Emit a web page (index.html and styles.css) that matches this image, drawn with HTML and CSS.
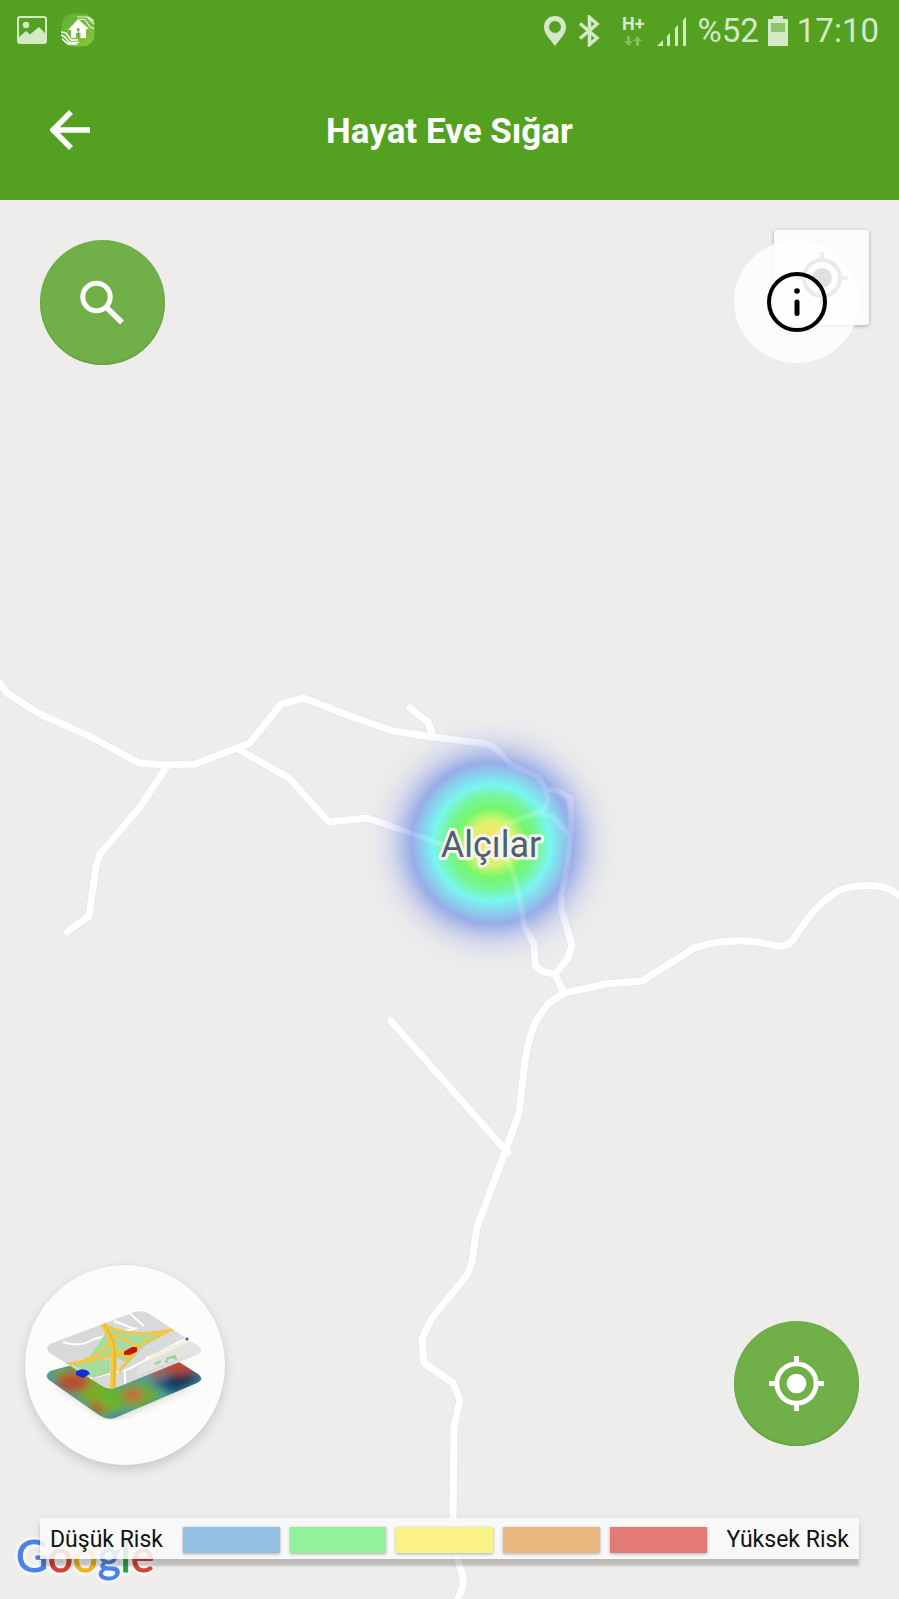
FILE: index.html
```html
<!DOCTYPE html>
<html lang="tr">
<head>
<meta charset="utf-8">
<meta name="viewport" content="width=device-width, initial-scale=1">
<title>Hayat Eve Sığar</title>
<link rel="stylesheet" href="styles.css">
</head>
<body>
<div class="app">
  <header class="header">
    <div class="status">
      <div class="status-group status-left">
        <svg width="30" height="28" viewBox="0 0 30 28" aria-hidden="true">
          <rect x="1" y="1" width="28" height="26" rx="2" fill="none" stroke="#d4e9c6" stroke-width="2"/>
          <circle cx="9" cy="9" r="3.2" fill="#d4e9c6"/>
          <path d="M2 21 L9 15 L13 18.500 L22 11 L28 17 V26 H2Z" fill="#d4e9c6"/>
        </svg>
        <svg width="34" height="34" viewBox="0 0 34 34" aria-hidden="true">
          <defs><linearGradient id="app-bg" x1="0" y1="0" x2="1" y2="1"><stop offset="0" stop-color="#5db032"/><stop offset="1" stop-color="#8cc343"/></linearGradient></defs>
          <rect x="0.500" y="0.500" width="33" height="33" rx="12" fill="url(#app-bg)"/>
          <path d="M17 6 L28 16 H25 V25 H19.500 V20 H15 V25 H10 V17 H7Z" fill="#fff"/>
          <circle cx="17.200" cy="16.500" r="1.500" fill="#5fae3d"/>
          <path d="M17 18h1v5h-1z" fill="#5fae3d"/>
          <path d="M16 4 H26 L33 11 M18 6.500 H24 L29 14 L33 15.500 M27 4 L33 8" fill="none" stroke="#e9f5dd" stroke-width="1.200"/>
          <path d="M0 19 L5 20 L10 27 H17 M0 22 L4 24 L8 29.500 H18 M1 26 L7 31 H16" fill="none" stroke="#fff" stroke-width="1.400"/>
        </svg>
      </div>
      <div class="status-group status-right">
        <svg class="pin" width="22" height="30" viewBox="0 0 22 30" aria-hidden="true"><path fill-rule="evenodd" d="M11 0C4.500 0 0 4.800 0 11c0 7 6 12 11 19 5-7 11-12 11-19C22 4.800 17.500 0 11 0Zm0 5a6 6 0 1 1 0 12 6 6 0 0 1 0-12Z" fill="#d4e9c6"/></svg>
        <svg class="bluetooth" width="22" height="32" viewBox="0 0 22 32" aria-hidden="true"><path d="M2 8.500 L19 23 L11.500 29.500 V2.500 L19 9 L2 23.500" fill="none" stroke="#d4e9c6" stroke-width="3.500"/></svg>
        <div class="network"><span>H+</span>
          <svg width="20" height="10" viewBox="0 0 20 10" aria-hidden="true"><path d="M4 0h3v5h3l-4.500 5L1 5h3ZM13 10h3V5h3l-4.500-5L10 5h3Z" fill="#86bd60"/></svg>
        </div>
        <svg class="signal" width="30" height="30" viewBox="0 0 30 30" aria-hidden="true"><path d="M0 30 L6 24 V30ZM10 20 L13 17 V30 H10ZM18 12 L21 9 V30 H18ZM26 4 L29 1 V30 H26Z" fill="#d4e9c6"/></svg>
        <span>%52</span>
        <svg class="battery" width="20" height="30" viewBox="0 0 20 30" aria-hidden="true"><path d="M5 0h10v3h5v27H0V3h5Z" fill="#d4e9c6"/><path d="M3 7h14v9H3z" fill="#8fc36c"/></svg>
        <time>17:10</time>
      </div>
    </div>
    <div class="toolbar">
      <button class="back" aria-label="Geri"><svg width="40" height="40" viewBox="0 0 40 40" aria-hidden="true"><path d="M21 2 L3 20 L21 38 M3 20 H40" fill="none" stroke="#fff" stroke-width="5.500"/></svg></button>
      <h1 class="title">Hayat Eve Sığar</h1>
    </div>
  </header>

  <main class="map">
    <svg class="map-canvas" viewBox="0 200 899 1399" preserveAspectRatio="xMidYMid slice" role="img" aria-label="Alçılar risk haritası">
      <defs>
        <radialGradient id="heat" gradientUnits="userSpaceOnUse" cx="492" cy="843" r="130">
          <stop offset="0" stop-color="#ffd25c" stop-opacity=".95"/>
          <stop offset=".08" stop-color="#f8e660" stop-opacity=".95"/>
          <stop offset=".17" stop-color="#d8f566" stop-opacity=".94"/>
          <stop offset=".27" stop-color="#6bf763" stop-opacity=".92"/>
          <stop offset=".35" stop-color="#69f68c" stop-opacity=".9"/>
          <stop offset=".45" stop-color="#69f7ef" stop-opacity=".88"/>
          <stop offset=".52" stop-color="#77d4ee" stop-opacity=".87"/>
          <stop offset=".62" stop-color="#8ba2e6" stop-opacity=".87"/>
          <stop offset=".7" stop-color="#96a7e7" stop-opacity=".57"/>
          <stop offset=".8" stop-color="#9caee8" stop-opacity=".23"/>
          <stop offset=".9" stop-color="#a5b4e8" stop-opacity=".07"/>
          <stop offset="1" stop-color="#a5b4e8" stop-opacity="0"/>
        </radialGradient>
        <g id="roads" fill="none" stroke-linecap="round" stroke-linejoin="round">
          <path d="M-4 678 8 694 40 714 93 738 139 763 165 765 195 764 237 748 250 743 281 704 304 698 347 715 393 731 433 737 482 743Q490 744 495 748L510 764 537 776 545 787 548 800 545 809 536 813 510 823 494 836 508 859 517 885 524 925 534 944 535 965 543 972 555 974 568 958 572 945 562 912 561 895 568 862 571 832 570 798 558 791 546 789"/>
          <path d="M410 708 428 722 433 736M238 749 289 778 329 822 368 818 410 833 441 844M167 766 140 807 100 854 96 866 89 916 67 932M536 813 553 817 567 833M555 974 564 993M391 1021 508 1153"/>
          <path d="M905 899 890 889Q875 884 860 886 842 887 835 893 822 901 808 918L797 934Q789 948 777 946L757 942Q726 938 698 947 693 948 688 952L642 981 606 984 564 993 548 1004 536 1021Q529 1036 525 1060L519 1113 505 1152 477 1227 472 1262 467 1275 432 1318 422 1339 424 1363 453 1383 460 1400 454 1427 453 1517 458 1560 463 1577V1586L456 1604"/>
        </g>
      </defs>
      <use href="#roads" class="road-edge"/>
      <use href="#roads" class="road-fill"/>
      <circle cx="492" cy="843" r="130" fill="url(#heat)"/>
      <use href="#roads" class="road-glow"/>
      <text class="place" x="491" y="857" text-anchor="middle">Alçılar</text>
    </svg>

    <div class="brand" aria-label="Google"><span class="g-blue">G</span><span class="g-red">o</span><span class="g-yellow">o</span><span class="g-blue">g</span><span class="g-green">l</span><span class="g-red">e</span></div>

    <button class="native-locate" aria-label="Konumum"><svg width="52" height="52" viewBox="0 0 52 52" aria-hidden="true"><circle cx="26" cy="26" r="18" fill="none" stroke="#999" stroke-width="4"/><circle cx="26" cy="26" r="10" fill="#666"/><path d="M26 0v8M26 44v8M0 26h8M44 26h8" stroke="#aaa" stroke-width="4"/></svg></button>

    <div class="overlay">
      <div class="row-top">
        <button class="round green" aria-label="Ara"><svg width="46" height="46" viewBox="0 0 46 46" aria-hidden="true"><circle cx="16.500" cy="17" r="13.700" fill="none" stroke="#fff" stroke-width="5"/><path d="M27 28 42 42.500" stroke="#fff" stroke-width="5.500"/></svg></button>
        <button class="round info" aria-label="Bilgi"><svg width="60" height="60" viewBox="0 0 60 60" aria-hidden="true"><circle cx="30" cy="30" r="28" fill="none" stroke="#000" stroke-width="4"/><circle cx="30" cy="19" r="2.800"/><path d="M30 30V41.500" stroke="#000" stroke-width="5" stroke-linecap="round"/></svg></button>
      </div>
      <div class="row-bottom">
        <button class="layers" aria-label="Harita katmanları">
          <svg width="160" height="110" viewBox="0 0 160 110" aria-hidden="true">
            <defs>
              <clipPath id="low"><path d="M5 61 Q-1 66 4 70 L54 105 Q63 111 72 107 L152 73 Q160 69 153 64 L105 34Z"/></clipPath>
              <clipPath id="high"><path d="M5 34 Q-1 38 5 43 L57 76 Q65 81 73 77 L152 45 Q160 41 153 36 L103 3 Q98 0 89 2Z"/></clipPath>
              <filter id="soft" x="-30%" y="-30%" width="160%" height="160%"><feGaussianBlur stdDeviation="4"/></filter>
              <linearGradient id="fade"><stop offset="0" stop-color="#d7d8d8"/><stop offset=".8" stop-color="#d9dadb"/><stop offset="1" stop-color="#e9e9ea"/></linearGradient>
            </defs>
            <path d="M8 74 65 112 152 75Z" fill="#000" opacity=".15" filter="url(#soft)"/>
            <g clip-path="url(#low)">
              <rect width="160" height="114" fill="#4d9c9e"/>
              <g filter="url(#soft)">
                <path d="M5 60 60 110 85 95 45 58Z" fill="#78ac2b"/>
                <ellipse cx="28" cy="72" rx="17" ry="10" fill="#b84d2f"/>
                <ellipse cx="53" cy="97" rx="9" ry="7" fill="#b1662c"/>
                <ellipse cx="72" cy="88" rx="20" ry="10" fill="#65b72e"/>
                <ellipse cx="93" cy="86" rx="22" ry="13" fill="#69a83b"/>
                <ellipse cx="88" cy="85" rx="10" ry="6" fill="#d05a3c"/>
                <path d="M105 73 145 59 160 67 130 84Z" fill="#154d77"/>
                <ellipse cx="135" cy="70" rx="14" ry="7" fill="#12364f"/>
                <ellipse cx="134" cy="55" rx="20" ry="9" fill="#bb4939"/>
                <ellipse cx="111" cy="62" rx="9" ry="5" fill="#be5140"/>
                <path d="M55 107 80 102 76 112Z" fill="#1980a0"/>
              </g>
            </g>
            <g clip-path="url(#high)">
              <path d="M0 0H160V85H0Z" fill="url(#fade)"/>
              <path d="M18 32Q35 38 49 29L92 18M69 11 90 19M82 1 99 16M45 68 84 59 134 32 159 24M80 59V79M101 48 122 40" fill="none" stroke="#fff" stroke-width="2"/>
              <path d="M94 54 155 26 158 38 91 66Z" fill="#e3e4e2"/>
              <path d="M105 48 146 29" stroke="#f4efd6" stroke-width="4"/>
              <path d="M64 18 Q91 29 128 20 L99 36 84 53 67 47 43 49Z" fill="#a7dba0"/>
              <path d="M26 54 65 49 65 63 48 68Z" fill="#a7dba0"/>
              <path d="M17 55 Q59 50 91 37L128 19M60 15Q86 29 126 20M67 26Q81 27 91 37M39 50Q56 45 65 32M94 37 74 62M70 39 Q78 50 90 44" fill="none" stroke="#f0c846" stroke-width="3"/>
              <path d="M58 14Q70 31 69 47L68 79" fill="none" stroke="#f3c83e" stroke-width="6"/>
              <path d="M59 14Q71 30 70 47L69 79" fill="none" stroke="#dca92d" stroke-width="1"/>
              <path d="M110 54 116 51M121 49 131 46M120 51l3 1M129 48l3 1" stroke="#9fd39b" stroke-width="2.500"/>
            </g>
            <path d="M80 42 87 38H91V41L84 44H80Z" fill="#bd1712" stroke="#bd1712" stroke-width="2" stroke-linejoin="round"/>
            <path d="M31 62 Q36 57 43 61L45 64 38 68 31 65Z" fill="#112bdc"/>
            <circle cx="142" cy="29" r="1.500" fill="#384aca"/>
          </svg>
        </button>
        <button class="round green locate" aria-label="Konuma git"><svg width="55" height="55" viewBox="0 0 56 56" aria-hidden="true"><circle cx="28" cy="28" r="20" fill="none" stroke="#fff" stroke-width="5"/><circle cx="28" cy="28" r="10" fill="#fff"/><path d="M28 0v7M28 49v7M0 28h7M49 28h7" stroke="#fff" stroke-width="5"/></svg></button>
      </div>
      <div class="legend">
        <span>Düşük Risk</span>
        <div class="scale"><i class="level-1"></i><i class="level-2"></i><i class="level-3"></i><i class="level-4"></i><i class="level-5"></i></div>
        <span>Yüksek Risk</span>
      </div>
    </div>
  </main>
</div>
</body>
</html>
```
FILE: styles.css
```css
* { box-sizing: border-box; }
body { margin: 0; font-family: Roboto, "Liberation Sans", sans-serif; }
button { border: 0; padding: 0; background: none; cursor: pointer; }
svg { display: block; flex: none; }

.app { min-height: 100vh; display: flex; flex-direction: column; }
.header { background: #54a121; color: #fff; }

.status {
  height: 60px;
  padding: 0 20px 0 17px;
  display: flex;
  justify-content: space-between;
  align-items: center;
  color: #d4e9c6;
  font-size: 33px;
  line-height: 40px;
}
.status-group { display: flex; align-items: center; }
.status-left { gap: 14px; }
.status-right { padding-top: 2px; }
.bluetooth { margin-left: 12px; }
.network {
  margin: 0 12px 0 22px;
  display: flex;
  flex-direction: column;
  align-items: center;
  gap: 4px;
  font-size: 18px;
  font-weight: 700;
  line-height: 16px;
}
.signal { margin-right: 11px; }
.battery { margin: 0 9px; }

.toolbar {
  height: 140px;
  padding: 0 50px;
  display: grid;
  grid-template-columns: 40px 1fr 40px;
  align-items: center;
}
.title { margin: 0; padding-top: 4px; text-align: center; font-size: 35px; line-height: 44px; font-weight: 700; }

.map { flex: 1; position: relative; display: flex; background: #eeedec; overflow: hidden; }
.map-canvas { position: absolute; inset: 0; width: 100%; height: 100%; }
.road-edge { stroke: #e8e8ea; stroke-width: 9px; }
.road-fill { stroke: #fff; stroke-width: 7px; }
.road-glow { stroke: #fff; stroke-width: 5px; opacity: .14; }
.place {
  font-size: 36px;
  fill: #51606a;
  stroke: #f4f6ee;
  stroke-width: 6px;
  stroke-linejoin: round;
  paint-order: stroke;
}

.brand {
  position: absolute;
  left: 16px;
  bottom: 18px;
  font-family: Lato, sans-serif;
  font-size: 44px;
  line-height: 52px;
  -webkit-text-stroke: 1px currentColor;
  filter: drop-shadow(0 0 2px #fff) drop-shadow(0 0 2px #fff);
}
.g-blue { color: #4a83e8; }
.g-red { color: #d04437; }
.g-yellow { color: #ebb51c; }
.g-green { color: #2c9f50; }

.native-locate {
  position: absolute;
  top: 30px;
  right: 30px;
  width: 95px;
  height: 95px;
  display: grid;
  place-items: center;
  border-radius: 3px;
  background: #fbfbfa;
  box-shadow: 0 1px 4px rgba(0, 0, 0, .28);
}

.overlay {
  flex: 1;
  position: relative;
  padding: 40px;
  display: flex;
  flex-direction: column;
}
.row-top { display: flex; justify-content: space-between; margin-bottom: auto; }
.round { width: 125px; height: 125px; display: grid; place-items: center; border-radius: 50%; }
.green { background: #71af49; box-shadow: inset 0 -1px 2px #5f9c39; }
.info { height: 123px; background: rgba(255, 255, 254, .8); }
.row-bottom { display: flex; justify-content: space-between; align-items: flex-end; margin: 0 0 53px -15px; }
.layers {
  width: 200px;
  height: 200px;
  display: grid;
  place-items: center;
  border-radius: 50%;
  background: #fcfcfb;
  box-shadow: 0 5px 12px rgba(0, 0, 0, .15), 0 0 2px rgba(0, 0, 0, .05);
}
.locate { margin-bottom: 19px; }

.legend {
  height: 41px;
  padding: 2px 10px 0;
  display: flex;
  align-items: center;
  gap: 20px;
  background: rgba(249, 249, 249, .87);
  box-shadow: 0 7px 2px rgba(0, 0, 0, .17), 0 2px 8px rgba(0, 0, 0, .1);
  color: #111;
  font-size: 23px;
  line-height: 28px;
  white-space: nowrap;
}
.scale { flex: 1; display: flex; gap: 10px; }
.scale i { flex: 1; height: 26px; box-shadow: 0 1px 3px rgba(0, 0, 0, .3); }
.level-1 { background: #92c0e3; }
.level-2 { background: #93f09b; }
.level-3 { background: #f9f287; }
.level-4 { background: #ebb980; }
.level-5 { background: #e27a76; }
```
